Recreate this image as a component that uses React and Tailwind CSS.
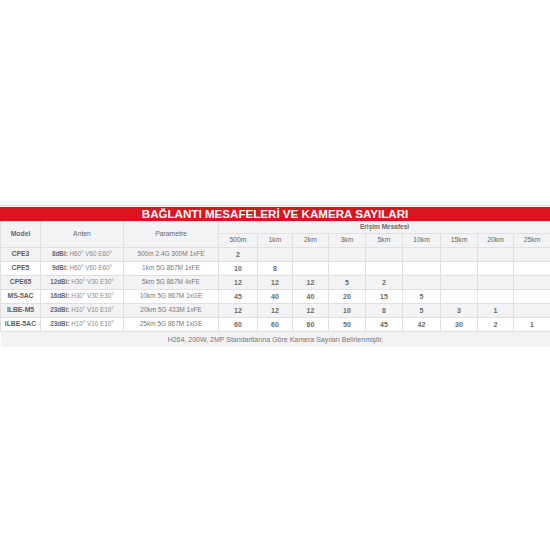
const distances = ['500m', '1km', '2km', '3km', '5km', '10km', '15km', '20km', '25km'];

const rows = [
  { model: 'CPE3', gain: '8dBi', angle: 'H60° V60 E60°', param: '500m 2.4G 300M 1xFE', values: ['2'] },
  { model: 'CPE5', gain: '9dBi', angle: 'H60° V60 E60°', param: '1km 5G 867M 1xFE', values: ['10', '8'] },
  { model: 'CPE65', gain: '12dBi', angle: 'H30° V30 E30°', param: '5km 5G 867M 4xFE', values: ['12', '12', '12', '5', '2'] },
  { model: 'MS-5AC', gain: '16dBi', angle: 'H30° V30 E30°', param: '10km 5G 867M 1xGE', values: ['45', '40', '40', '20', '15', '5'] },
  { model: 'ILBE-M5', gain: '23dBi', angle: 'H10° V10 E10°', param: '20km 5G 433M 1xFE', values: ['12', '12', '12', '10', '8', '5', '3', '1'] },
  { model: 'ILBE-5AC', gain: '23dBi', angle: 'H10° V10 E10°', param: '25km 5G 867M 1xGE', values: ['60', '60', '60', '50', '45', '42', '30', '2', '1'] },
];

function App() {
  return (
    <div className="w-[550px] h-[550px] bg-white flex flex-col pt-[205px]" style={{ fontFamily: '"Liberation Sans", Arial, sans-serif' }}>
      <div className="border-t border-[#e2e2e2] pt-[1px]">
        <div className="h-[14px] bg-[#d7161f] flex items-center justify-center text-white font-bold text-[11.6px] leading-none">
          BAĞLANTI MESAFELERİ VE KAMERA SAYILARI
        </div>
        <table className="w-[550px] table-fixed border-collapse text-[#666] text-[6.5px] leading-none">
          <colgroup>
            <col className="w-[40px]" />
            <col className="w-[83px]" />
            <col className="w-[95px]" />
            <col className="w-[39px]" />
            <col className="w-[35px]" />
            <col className="w-[36px]" />
            <col className="w-[37px]" />
            <col className="w-[37px]" />
            <col className="w-[38px]" />
            <col className="w-[37px]" />
            <col className="w-[36px]" />
            <col className="w-[37px]" />
          </colgroup>
          <thead>
            <tr className="h-[12px] bg-[#f3f3f5]">
              <th rowSpan={2} className="border border-[#e0e0e3] font-bold text-[6.8px] text-[#6a6a6a]">Model</th>
              <th rowSpan={2} className="border border-[#e0e0e3] font-normal text-[6.8px]">Anten</th>
              <th rowSpan={2} className="border border-[#e0e0e3] font-normal text-[6.8px]">Parametre</th>
              <th colSpan={9} className="border border-[#e0e0e3] font-bold text-[6.5px] text-[#6a6a6a]">Erişim Mesafesi</th>
            </tr>
            <tr className="h-[14px] bg-[#f3f3f5]">
              {distances.map((d) => (
                <th key={d} className="border border-[#e0e0e3] font-normal text-[6.8px]">{d}</th>
              ))}
            </tr>
          </thead>
          <tbody>
            {rows.map((r, i) => (
              <tr key={r.model} className={`h-[14px] ${i % 2 === 0 ? 'bg-[#f3f3f5]' : 'bg-white'}`}>
                <td className="border border-[#e0e0e3] text-center font-bold text-[6.8px] text-[#5e5e5e] whitespace-nowrap">{r.model}</td>
                <td className="border border-[#e0e0e3] text-center text-[6.3px] whitespace-nowrap">
                  <span className="font-bold text-[#666]">{r.gain}:</span> <span className="text-[#888]">{r.angle}</span>
                </td>
                <td className="border border-[#e0e0e3] text-center text-[6.5px] text-[#777] whitespace-nowrap">{r.param}</td>
                {distances.map((d, j) => (
                  <td key={d} className="border border-[#e0e0e3] text-center font-bold text-[7px] text-[#6a6a6a]">
                    {r.values[j] || ''}
                  </td>
                ))}
              </tr>
            ))}
            <tr className="h-[15px] bg-[#f3f3f5]">
              <td colSpan={12} className="text-center text-[7px] text-[#777]">
                H264, 200W, 2MP Standartlarına Göre Kamera Sayıları Belirlenmiştir.
              </td>
            </tr>
          </tbody>
        </table>
      </div>
    </div>
  );
}

export default App;
